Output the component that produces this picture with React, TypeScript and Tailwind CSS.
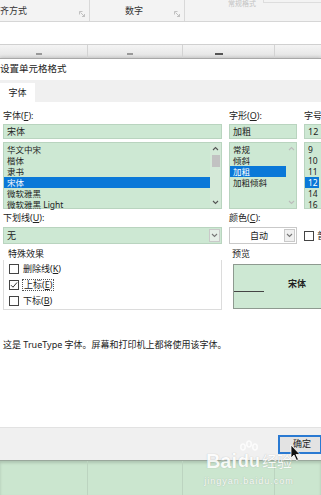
import React from "react";

const F = "font-['Noto_Sans','Noto_Sans_CJK_SC',sans-serif]";

function Launcher() {
  return (
    <svg width="6" height="6" viewBox="0 0 6 6" className="opacity-50">
      <path d="M0.5 0.5H3.5M0.5 0.5V3.5M1.5 1.5L5.5 5.5M5.5 3V5.5H3" stroke="#777" strokeWidth="0.8" fill="none" />
    </svg>
  );
}

function Chevron({ up, color = "#555" }: { up?: boolean; color?: string }) {
  return (
    <svg width="7" height="5" viewBox="0 0 7 5">
      <path d={up ? "M1 4L3.5 1.5L6 4" : "M1 1L3.5 3.5L6 1"} stroke={color} strokeWidth="1.1" fill="none" />
    </svg>
  );
}

function ListRow({ text, selected, width }: { text: string; selected?: boolean; width?: string }) {
  return (
    <div
      className={`h-[11px] leading-[11px] text-[8.5px] pl-[3px] whitespace-nowrap ${width ?? ""} ${
        selected ? "bg-[#0a78d8] text-white" : "text-[#222]"
      }`}
    >
      {text}
    </div>
  );
}

function Check({ checked }: { checked?: boolean }) {
  return (
    <div className="w-[10px] h-[10px] border border-[#444] bg-white flex items-center justify-center shrink-0">
      {checked && (
        <svg width="8" height="8" viewBox="0 0 8 8">
          <path d="M1 4.2L3 6.2L7 1.5" stroke="#333" strokeWidth="1" fill="none" />
        </svg>
      )}
    </div>
  );
}

export default function App() {
  return (
    <div className={`${F} relative w-[321px] h-[495px] overflow-hidden bg-white text-[9px] text-[#222]`}>
      {/* Ribbon group labels */}
      <div className="h-[22px] bg-[#f3f3f3] border-b border-[#d6d6d6] flex">
        <div className="w-[90px] h-full border-r border-[#d8d8d8] flex items-end justify-between pb-[4px] pr-[4px]">
          <span className="text-[#333] whitespace-nowrap">齐方式</span>
          <Launcher />
        </div>
        <div className="w-[95px] h-full border-r border-[#d8d8d8] flex items-end pb-[4px] pr-[4px]">
          <span className="text-[#333] ml-[35px]">数字</span>
          <span className="ml-auto">
            <Launcher />
          </span>
        </div>
        <div className="flex-1 h-full relative">
          <span className="absolute top-0 left-[43px] text-[#c4c4c4] text-[7px] leading-[7px]">常规格式</span>
          <div className="absolute top-0 left-[78px] w-[60px] h-[3px] border-b border-l border-[#ddd]" />
        </div>
      </div>
      {/* formula area */}
      <div className="h-[22px] bg-white" />
      {/* column headers */}
      <div className="h-[14px] bg-gradient-to-b from-[#f4f4f4] to-[#e4e4e4] border-t border-[#d0d0d0] flex overflow-hidden">
        <div className="w-[88px] border-r border-[#d3d3d3] flex justify-center pt-[8px]">
          <div className="w-[6px] h-[2px] bg-[#999] ml-[-10px]" />
        </div>
        <div className="w-[95px] border-r border-[#d3d3d3] flex justify-center pt-[8px]">
          <div className="w-[6px] h-[2px] bg-[#999] ml-[-10px]" />
        </div>
        <div className="w-[92px] border-r border-[#d3d3d3] flex justify-center pt-[8px]">
          <div className="w-[8px] h-[2px] bg-[#555] ml-[-20px]" />
        </div>
        <div className="flex-1" />
      </div>

      {/* Dialog */}
      <div className="border-t border-[#a8a8a8] shadow-[0_-1px_3px_rgba(0,0,0,0.15)] bg-white">
        <div className="h-[21px] flex items-center bg-white">
          <span className="text-[9.5px] text-[#222] whitespace-nowrap">设置单元格格式</span>
        </div>
        <div className="h-[22px] bg-[#f0f0f0] flex items-end">
          <div className="w-[35px] h-[19px] bg-white flex items-center justify-center text-[#222]">字体</div>
        </div>

        {/* Body */}
        <div className="h-[325px] bg-white pl-[3px] pt-[8px]">
          {/* labels row */}
          <div className="flex h-[12px] leading-[12px] whitespace-nowrap">
            <div className="w-[226px] shrink-0">
              字体(<span className="underline">F</span>):
            </div>
            <div className="w-[75px] shrink-0">
              字形(<span className="underline">O</span>):
            </div>
            <div className="shrink-0">字号</div>
          </div>
          {/* inputs */}
          <div className="flex mt-[2px] gap-[7px]">
            <div className="w-[219px] shrink-0 h-[15px] bg-[#cde8d3] border border-[#b9d4bf] pl-[3px] leading-[13px]">宋体</div>
            <div className="w-[68px] shrink-0 h-[15px] bg-[#cde8d3] border border-[#b9d4bf] pl-[3px] leading-[13px]">加粗</div>
            <div className="w-[40px] shrink-0 h-[15px] bg-[#cde8d3] border border-[#b9d4bf] pl-[3px] leading-[13px]">12</div>
          </div>
          {/* lists */}
          <div className="flex mt-[3px] gap-[7px]">
            <div className="w-[219px] shrink-0 h-[67px] bg-[#cde8d3] border border-[#b9d4bf] flex">
              <div className="flex-1 pt-[1px]">
                <ListRow text="华文中宋" />
                <ListRow text="楷体" />
                <ListRow text="隶书" />
                <ListRow text="宋体" selected />
                <ListRow text="微软雅黑" />
                <ListRow text="微软雅黑 Light" />
              </div>
              <div className="w-[11px] bg-[#d4e9d8] flex flex-col items-center pt-[3px] pb-[3px]">
                <Chevron up />
                <div className="w-[8px] h-[12px] bg-[#c2c2c2] mt-[4px]" />
                <div className="flex-1" />
                <Chevron />
              </div>
            </div>
            <div className="w-[68px] shrink-0 h-[67px] bg-[#cde8d3] border border-[#b9d4bf] flex">
              <div className="flex-1 pt-[1px]">
                <ListRow text="常规" />
                <ListRow text="倾斜" />
                <ListRow text="加粗" selected />
                <ListRow text="加粗倾斜" />
              </div>
              <div className="w-[10px] flex flex-col items-center pt-[3px] pb-[3px]">
                <Chevron up color="#bbb" />
                <div className="flex-1" />
                <Chevron color="#bbb" />
              </div>
            </div>
            <div className="w-[40px] shrink-0 h-[67px] bg-[#cde8d3] border border-[#b9d4bf] pt-[1px]">
              <ListRow text="9" />
              <ListRow text="10" />
              <ListRow text="11" />
              <ListRow text="12" selected width="w-[14px]" />
              <ListRow text="14" />
              <ListRow text="16" />
            </div>
          </div>

          {/* underline / color */}
          <div className="flex mt-[3px] h-[12px] leading-[12px] whitespace-nowrap">
            <div className="w-[226px] shrink-0">
              下划线(<span className="underline">U</span>):
            </div>
            <div className="shrink-0">
              颜色(<span className="underline">C</span>):
            </div>
          </div>
          <div className="flex mt-[3px] gap-[7px] items-center h-[17px]">
            <div className="w-[219px] shrink-0 h-[17px] bg-[#cde8d3] border border-[#b9d4bf] flex items-center">
              <span className="pl-[3px] flex-1">无</span>
              <div className="w-[11px] h-[13px] mr-[1px] border border-[#c9c9c9] bg-[#e6efe8] flex items-center justify-center">
                <Chevron color="#777" />
              </div>
            </div>
            <div className="w-[68px] shrink-0 h-[17px] bg-white border border-[#c9c9c9] flex items-center">
              <span className="flex-1 text-center pl-[4px]">自动</span>
              <div className="w-[11px] h-[13px] mr-[1px] border border-[#c9c9c9] bg-[#f0f0f0] flex items-center justify-center">
                <Chevron color="#777" />
              </div>
            </div>
            <div className="flex items-center gap-[3px] shrink-0 whitespace-nowrap">
              <Check />
              <span>普通字体</span>
            </div>
          </div>

          {/* effects + preview */}
          <div className="flex mt-[4px] gap-[9px]">
            <div className="w-[219px] shrink-0 h-[62px] flex flex-col">
              <div className="h-[12px] leading-[12px] pl-[5px]">特殊效果</div>
              <div className="flex-1 border border-[#dcdcdc] border-t-0 pl-[5px] pt-[3px] flex flex-col gap-[5px]">
                <div className="flex items-center gap-[4px] h-[11px]">
                  <Check />
                  <span>删除线(<span className="underline">K</span>)</span>
                </div>
                <div className="flex items-center gap-[3px] h-[11px]">
                  <Check checked />
                  <span className="border border-dotted border-[#555] px-[1px] leading-[10px]">
                    上标(<span className="underline">E</span>)
                  </span>
                </div>
                <div className="flex items-center gap-[4px] h-[11px]">
                  <Check />
                  <span>下标(<span className="underline">B</span>)</span>
                </div>
              </div>
            </div>
            <div className="flex-1 flex flex-col">
              <div className="h-[12px] leading-[12px] pl-[1px]">预览</div>
              <div className="mt-[4px] ml-[2px] h-[45px] bg-[#cde8d3] border border-[#8e9a90] border-r-0 relative flex items-center">
                <span className="ml-[54px] font-bold text-[9px] text-[#222] -mt-[5px]">宋体</span>
                <div className="absolute left-0 top-[26px] w-[30px] h-px bg-[#444]" />
              </div>
            </div>
          </div>

          <div className="mt-[28px] whitespace-nowrap">这是 TrueType 字体。屏幕和打印机上都将使用该字体。</div>
        </div>

        {/* bottom bar */}
        <div className="h-[33px] bg-[#f0f0f0] border-t border-[#e2e2e2] flex items-center justify-end">
          <div className="w-[44px] h-[19px] -mr-[1px] border-2 border-[#2a7ad2] bg-[#e3e3e3] flex items-center justify-center text-[#222]">
            <span className="pl-[4px]">确定</span>
          </div>
        </div>
      </div>

      {/* Excel cells below */}
      <div className="h-[35px] bg-[#cbe6cf] border-t border-[#9aa89c] shadow-[inset_0_2px_3px_rgba(0,0,0,0.15)] flex">
        <div className="w-[88px] border-r border-[#bcd4c0]" />
        <div className="w-[95px] border-r border-[#bcd4c0]" />
        <div className="w-[92px] border-r border-[#bcd4c0]" />
      </div>

      {/* Baidu watermark */}
      <div className="absolute left-[204px] top-[440px] w-[90px] flex flex-col items-center text-white opacity-85 pointer-events-none [text-shadow:0_0_1px_rgba(120,120,120,0.6)]">
        <div className="flex items-end h-[31px]">
          <span className="text-[20px] font-bold leading-[20px] font-['Liberation_Sans',sans-serif]">Bai</span>
          <span className="relative ml-[1px]">
            <svg width="22" height="11" viewBox="0 0 22 11" className="absolute -top-[11px] left-0">
              <ellipse cx="5" cy="7" rx="2.2" ry="3" fill="none" stroke="white" strokeWidth="1.5" />
              <ellipse cx="11" cy="4" rx="2.2" ry="3" fill="none" stroke="white" strokeWidth="1.5" />
              <ellipse cx="17" cy="7" rx="2.2" ry="3" fill="none" stroke="white" strokeWidth="1.5" />
            </svg>
            <span className="text-[18px] font-bold leading-[20px] font-['Liberation_Sans',sans-serif]">du</span>
          </span>
          <span className="text-[15px] leading-[19px] ml-[2px] whitespace-nowrap">经验</span>
        </div>
        <span className="text-[9px] tracking-[1px] leading-[14px] mt-[3px] whitespace-nowrap font-['Liberation_Sans',sans-serif]">jingyan.baidu.com</span>
      </div>

      {/* cursor */}
      <svg className="absolute left-[290px] top-[444px]" width="12" height="18" viewBox="0 0 12 18">
        <path d="M1 1V14L4 11L6.5 16.5L8.5 15.5L6 10.5H10Z" fill="#111" stroke="white" strokeWidth="0.8" />
      </svg>
    </div>
  );
}
